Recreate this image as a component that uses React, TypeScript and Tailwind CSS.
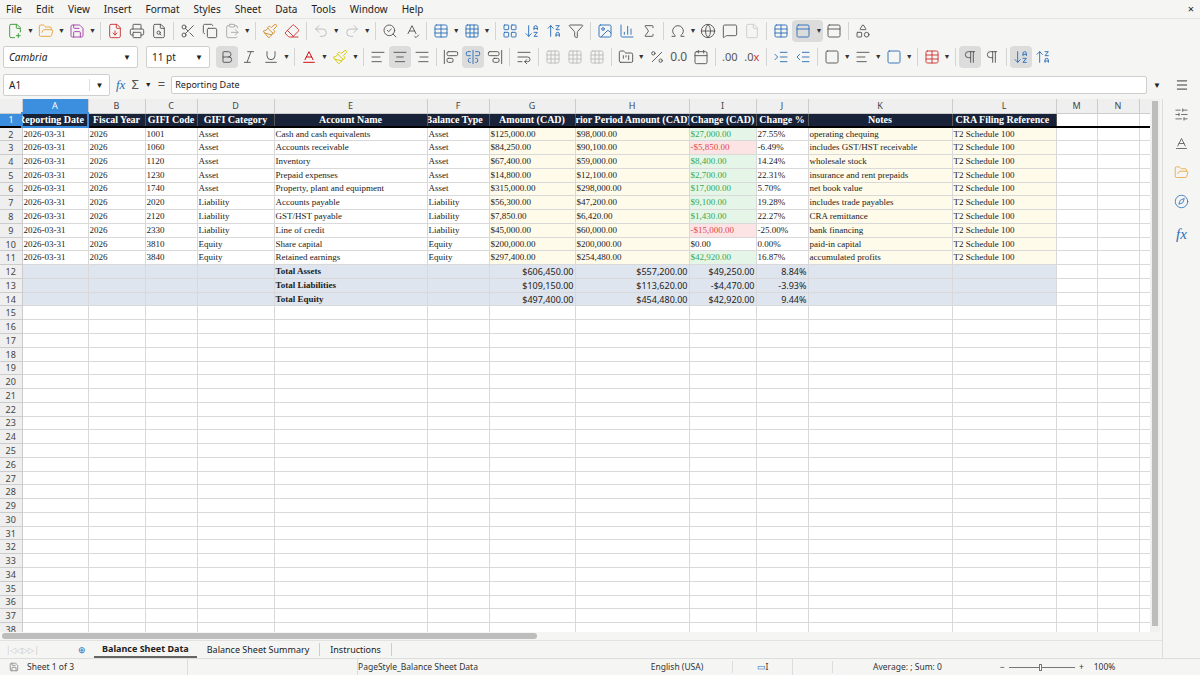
import React from "react";
import {
  FilePlus2, FolderOpen, Save, FileDown, Printer, FileSearch, Scissors, Copy, ClipboardPaste, Paintbrush, Eraser,
  Undo2, Redo2, SearchCheck, SpellCheck, Table, Grid3x3, ArrowDownAZ, ArrowUpZA, Filter, Image, BarChart3, Sigma,
  Omega, Globe, MessageSquare, File, LayoutGrid, PanelTop, Shapes, Bold, Italic, Underline, AlignLeft, AlignCenter,
  AlignRight, AlignStartVertical, AlignCenterVertical, AlignEndVertical, WrapText, Percent, Calendar, IndentIncrease,
  IndentDecrease, Square, Menu, SlidersHorizontal, Baseline, FolderKanban, Compass, Pilcrow
} from "lucide-react";

const cols: [string, number][] = [
  ["A", 66], ["B", 57], ["C", 52], ["D", 77], ["E", 153], ["F", 62], ["G", 86], ["H", 114],
  ["I", 67], ["J", 52], ["K", 144], ["L", 104], ["M", 41], ["N", 42], ["", 11],
];

type Row = string[];
const data: Row[] = [
  ["1001", "Asset", "Cash and cash equivalents", "Asset", "$125,000.00", "$98,000.00", "$27,000.00", "27.55%", "operating chequing"],
  ["1060", "Asset", "Accounts receivable", "Asset", "$84,250.00", "$90,100.00", "-$5,850.00", "-6.49%", "includes GST/HST receivable"],
  ["1120", "Asset", "Inventory", "Asset", "$67,400.00", "$59,000.00", "$8,400.00", "14.24%", "wholesale stock"],
  ["1230", "Asset", "Prepaid expenses", "Asset", "$14,800.00", "$12,100.00", "$2,700.00", "22.31%", "insurance and rent prepaids"],
  ["1740", "Asset", "Property, plant and equipment", "Asset", "$315,000.00", "$298,000.00", "$17,000.00", "5.70%", "net book value"],
  ["2020", "Liability", "Accounts payable", "Liability", "$56,300.00", "$47,200.00", "$9,100.00", "19.28%", "includes trade payables"],
  ["2120", "Liability", "GST/HST payable", "Liability", "$7,850.00", "$6,420.00", "$1,430.00", "22.27%", "CRA remittance"],
  ["2330", "Liability", "Line of credit", "Liability", "$45,000.00", "$60,000.00", "-$15,000.00", "-25.00%", "bank financing"],
  ["3810", "Equity", "Share capital", "Equity", "$200,000.00", "$200,000.00", "$0.00", "0.00%", "paid-in capital"],
  ["3840", "Equity", "Retained earnings", "Equity", "$297,400.00", "$254,480.00", "$42,920.00", "16.87%", "accumulated profits"],
];
const totals = [
  ["Total Assets", "$606,450.00", "$557,200.00", "$49,250.00", "8.84%"],
  ["Total Liabilities", "$109,150.00", "$113,620.00", "-$4,470.00", "-3.93%"],
  ["Total Equity", "$497,400.00", "$454,480.00", "$42,920.00", "9.44%"],
];
const headers = ["Reporting Date", "Fiscal Year", "GIFI Code", "GIFI Category", "Account Name", "Balance Type", "Amount (CAD)", "Prior Period Amount (CAD)", "Change (CAD)", "Change %", "Notes", "CRA Filing Reference"];

const serif = { fontFamily: '"Liberation Serif", "DejaVu Serif", serif' };
const ui = { fontFamily: '"Noto Sans", "Open Sans", sans-serif' };

const I = ({ c: C, cls = "text-[#555]" }: { c: any; cls?: string }) => (
  <div className="flex items-center justify-center w-[22px] h-[22px]"><C size={16} strokeWidth={1.4} className={cls} /></div>
);
const Dd = () => <span className="text-[7px] text-[#333] mx-[1px]">▼</span>;
const Sep = () => <div className="w-px h-[18px] bg-[#d4d4d4] mx-[3px]" />;

export default function App() {
  const cell = "h-[13.77px] p-0 px-[1px] border-r border-b border-[#d9d9d9] overflow-hidden whitespace-nowrap leading-[11px]";
  const rh = "h-[13.77px] p-0 bg-[#efefef] text-center text-[#444] border-r border-b border-[#ccc] leading-[11px]";
  return (
    <div className="w-[1200px] h-[675px] bg-[#f5f5f4] flex flex-col overflow-hidden text-[#222]" style={ui}>
      <div className="h-[18px] flex items-center gap-[14px] px-[6px] text-[10px]">
        {["File", "Edit", "View", "Insert", "Format", "Styles", "Sheet", "Data", "Tools", "Window", "Help"].map(m => <span key={m}>{m}</span>)}
        <span className="ml-auto text-[11px]">×</span>
      </div>
      <div className="h-[25px] flex items-center px-[4px] border-t border-[#e4e4e4]">
        <I c={FilePlus2} cls="text-[#3a9a3a]" /><Dd /><I c={FolderOpen} cls="text-[#e8a33a]" /><Dd /><I c={Save} cls="text-[#a33ea8]" /><Dd /><Sep />
        <I c={FileDown} cls="text-[#c33]" /><I c={Printer} /><I c={FileSearch} /><Sep />
        <I c={Scissors} /><I c={Copy} /><I c={ClipboardPaste} cls="text-[#aaa]" /><Dd /><Sep />
        <I c={Paintbrush} cls="text-[#d08a2a]" /><I c={Eraser} cls="text-[#c33]" /><Sep />
        <I c={Undo2} cls="text-[#bbb]" /><Dd /><I c={Redo2} cls="text-[#bbb]" /><Dd /><Sep />
        <I c={SearchCheck} /><I c={SpellCheck} /><Sep />
        <I c={Table} cls="text-[#2c6fb8]" /><Dd /><I c={Grid3x3} cls="text-[#2c6fb8]" /><Dd /><Sep />
        <I c={LayoutGrid} cls="text-[#2c6fb8]" /><I c={ArrowDownAZ} cls="text-[#2c6fb8]" /><I c={ArrowUpZA} cls="text-[#2c6fb8]" /><I c={Filter} /><Sep />
        <I c={Image} cls="text-[#2c6fb8]" /><I c={BarChart3} cls="text-[#2c6fb8]" /><I c={Sigma} /><Sep />
        <I c={Omega} /><Dd /><I c={Globe} /><I c={MessageSquare} /><I c={File} cls="text-[#ccc]" /><Sep />
        <I c={Table} cls="text-[#2c6fb8]" /><div className="bg-[#dcdcdc] rounded flex items-center"><I c={PanelTop} cls="text-[#2c6fb8]" /><Dd /></div><I c={PanelTop} /><Sep /><I c={Shapes} />
      </div>
      <div className="h-[28px] flex items-center px-[3px]">
        <div className="w-[135px] h-[22px] bg-white border border-[#cfcfcf] rounded-[2px] flex items-center text-[10px] italic pl-[5px]">
          <span className="flex-1">Cambria</span><span className="text-[8px] not-italic w-[20px] text-center">▼</span>
        </div>
        <div className="w-[64px] h-[22px] ml-[8px] bg-white border border-[#cfcfcf] rounded-[2px] flex items-center text-[10px] pl-[5px]">
          <span className="flex-1">11 pt</span><span className="text-[8px] w-[20px] text-center">▼</span>
        </div>
        <div className="bg-[#dcdcdc] rounded ml-[6px]"><I c={Bold} /></div><I c={Italic} /><I c={Underline} /><Dd /><Sep />
        <I c={Baseline} cls="text-[#c00]" /><Dd /><I c={Paintbrush} cls="text-[#d4c800]" /><Dd /><Sep />
        <I c={AlignLeft} /><div className="bg-[#dcdcdc] rounded"><I c={AlignCenter} /></div><I c={AlignRight} /><Sep />
        <I c={AlignStartVertical} /><div className="bg-[#dcdcdc] rounded"><I c={AlignCenterVertical} cls="text-[#2c6fb8]" /></div><I c={AlignEndVertical} /><Sep />
        <I c={WrapText} /><Sep /><I c={Grid3x3} cls="text-[#bbb]" /><I c={Grid3x3} cls="text-[#bbb]" /><I c={Grid3x3} cls="text-[#bbb]" /><Sep />
        <I c={FolderKanban} /><Dd /><I c={Percent} /><span className="text-[12px] text-[#555] w-[22px] text-center">0.0</span><I c={Calendar} /><Sep />
        <span className="text-[11px] text-[#555] w-[22px] text-center">.00</span><span className="text-[11px] text-[#555] w-[22px] text-center">.0<span className="text-[#c33]">x</span></span><Sep />
        <I c={IndentIncrease} cls="text-[#2c6fb8]" /><I c={IndentDecrease} cls="text-[#2c6fb8]" /><Sep />
        <I c={Square} /><Dd /><I c={AlignLeft} /><Dd /><I c={Square} cls="text-[#2c6fb8]" /><Dd /><Sep />
        <I c={Table} cls="text-[#c33]" /><Dd /><Sep />
        <div className="bg-[#dcdcdc] rounded"><I c={Pilcrow} /></div><I c={Pilcrow} /><Sep />
        <div className="bg-[#dcdcdc] rounded"><I c={ArrowDownAZ} cls="text-[#2c6fb8]" /></div><I c={ArrowUpZA} cls="text-[#2c6fb8]" />
      </div>
      <div className="h-[28px] flex items-center px-[3px] gap-[6px]">
        <div className="w-[107px] h-[22px] bg-white border border-[#cfcfcf] rounded-[2px] flex items-center text-[10px] pl-[5px]">
          <span className="flex-1">A1</span><span className="text-[8px] w-[20px] text-center border-l border-[#ddd]">▼</span>
        </div>
        <span className="italic text-[#2c6fb8] text-[13px]" style={serif}>fx</span>
        <span className="text-[13px] text-[#555]">Σ</span><span className="text-[7px]">▼</span>
        <span className="text-[13px] text-[#555]">=</span>
        <div className="flex-1 h-[18px] bg-white border border-[#cfcfcf] rounded-[2px] text-[9px] flex items-center pl-[3px]">Reporting Date</div>
        <span className="text-[8px]">▼</span>
        <div className="w-[30px] flex justify-center"><Menu size={14} strokeWidth={1.5} /></div>
      </div>
      <div className="flex-1 flex min-h-0">
        <div className="flex-1 flex flex-col min-w-0">
          <div className="flex-1 flex min-h-0">
            <div className="w-[1150px] overflow-hidden bg-white">
              <table className="table-fixed border-collapse text-[9px]" style={{ ...serif, width: 1150 }}>
                <colgroup>
                  <col style={{ width: 22 }} />
                  {cols.map(([, w], i) => <col key={i} style={{ width: w }} />)}
                </colgroup>
                <tbody>
                  <tr>
                    <td className="h-[14px] p-0 bg-[#efefef] border-r border-b border-[#ccc]"></td>
                    {cols.map(([n], i) => (
                      <td key={i} className={`h-[14px] p-0 leading-[11px] text-center border-r border-b border-[#ccc] text-[9px] ${n === "A" ? "bg-[#3c8fde] text-white" : "bg-[#efefef] text-[#444]"}`} style={ui}>{n}</td>
                    ))}
                  </tr>
                  <tr>
                    <td className="h-[14px] p-0 leading-[11px] bg-[#3c8fde] text-white text-center text-[9px] border-b-2 border-b-black" style={ui}>1</td>
                    {headers.map((h, i) => (
                      <td key={i} className={`h-[14px] p-0 bg-[#18233a] text-white font-bold text-[10px] whitespace-nowrap overflow-hidden border-r border-[#555] border-b-2 border-b-black leading-[11px] ${[0, 5, 7].includes(i) ? "" : "text-center"} ${i === 0 ? "outline outline-2 outline-[#3c8fde] -outline-offset-1" : ""} ${i === 11 ? "text-left pl-[3px]" : ""}`}>
                        {i === 0 ? <span className="relative -left-[4px]">Reporting Date</span> : i === 7 ? <span className="relative -left-[6px]">Prior Period Amount (CAD)</span> : i === 5 ? <span className="relative -left-[2px]">Balance Type</span> : h}
                      </td>
                    ))}
                    <td className="p-0 border-b-2 border-b-black border-r border-[#d9d9d9]"></td><td className="p-0 border-b-2 border-b-black border-r border-[#d9d9d9]"></td><td className="p-0 border-b-2 border-b-black"></td>
                  </tr>
                  {data.map((r, i) => {
                    const neg = r[6].startsWith("-");
                    const zero = r[6] === "$0.00";
                    return (
                      <tr key={i}>
                        <td className={rh} style={ui}>{i + 2}</td>
                        <td className={cell}>2026-03-31</td>
                        <td className={cell}>2026</td>
                        <td className={cell}>{r[0]}</td>
                        <td className={cell}>{r[1]}</td>
                        <td className={cell}>{r[2]}</td>
                        <td className={cell}>{r[3]}</td>
                        <td className={`${cell} bg-[#fffbea]`}>{r[4]}</td>
                        <td className={`${cell} bg-[#fffbea]`}>{r[5]}</td>
                        <td className={`${cell} ${zero ? "bg-white" : neg ? "bg-[#fde4e4] text-[#e04848]" : "bg-[#e5f6e8] text-[#33a852]"}`}>{r[6]}</td>
                        <td className={cell}>{r[7]}</td>
                        <td className={`${cell} bg-[#fffbea]`}>{r[8]}</td>
                        <td className={`${cell} bg-[#fffbea]`}>T2 Schedule 100</td>
                        <td className={cell}></td><td className={cell}></td><td className={cell}></td>
                      </tr>
                    );
                  })}
                  {totals.map((t, i) => (
                    <tr key={i}>
                      <td className={rh} style={ui}>{i + 12}</td>
                      {[0, 1, 2, 3].map(k => <td key={k} className={`${cell} bg-[#dfe5ee]`}></td>)}
                      <td className={`${cell} bg-[#dfe5ee] font-bold`}>{t[0]}</td>
                      <td className={`${cell} bg-[#dfe5ee]`}></td>
                      {[1, 2, 3, 4].map(k => <td key={k} className={`${cell} bg-[#dfe5ee] text-right text-[9px]`} style={ui}>{t[k]}</td>)}
                      <td className={`${cell} bg-[#dfe5ee]`}></td><td className={`${cell} bg-[#dfe5ee]`}></td>
                      <td className={cell}></td><td className={cell}></td><td className={cell}></td>
                    </tr>
                  ))}
                  {Array.from({ length: 25 }, (_, i) => (
                    <tr key={i}>
                      <td className={rh} style={ui}>{i + 15}</td>
                      {cols.map((_, k) => <td key={k} className={cell}></td>)}
                    </tr>
                  ))}
                </tbody>
              </table>
            </div>
            <div className="w-[10px] bg-[#f0f0f0] flex justify-center pt-[2px]">
              <div className="w-[6px] h-[525px] bg-[#bdbdbd]" />
            </div>
          </div>
          <div className="h-[8px] flex items-center bg-[#f5f5f4]">
            <div className="w-[535px] h-[6px] bg-[#bdbdbd] ml-[2px] rounded-sm" />
          </div>
          <div className="h-[18px] flex items-center text-[9px] border-t border-[#e2e2e2]">
            <span className="text-[#ccc] text-[8px] w-[62px] pl-[6px] overflow-hidden whitespace-nowrap">|◁◁▷▷|</span>
            <span className="text-[#2c6fb8] ml-[16px] mr-[8px]">⊕</span>
            <span className="font-bold px-[8px] border-b-2 border-[#666] h-full flex items-center">Balance Sheet Data</span>
            <span className="px-[10px] border-r border-[#ccc]">Balance Sheet Summary</span>
            <span className="px-[10px] border-r border-[#ccc]">Instructions</span>
          </div>
        </div>
        <div className="w-[38px] border-l border-[#ddd] flex flex-col items-center gap-[14px] pt-[8px]">
          <SlidersHorizontal size={15} strokeWidth={1.3} className="text-[#555]" />
          <Baseline size={15} strokeWidth={1.3} className="text-[#555]" />
          <FolderOpen size={15} strokeWidth={1.3} className="text-[#e8a33a]" />
          <Compass size={15} strokeWidth={1.3} className="text-[#2c6fb8]" />
          <span className="italic text-[#2c6fb8] text-[15px]" style={serif}>fx</span>
        </div>
      </div>
      <div className="h-[17px] flex items-center text-[8.5px] text-[#333] border-t border-[#ddd]">
        <span className="w-[27px] flex justify-center"><Save size={10} className="text-[#888]" /></span>
        <span className="w-[160px]">Sheet 1 of 3</span>
        <span className="w-[170px] border-l border-[#ddd] h-full"></span>
        <span className="w-[265px] border-l border-[#ddd] h-full flex items-center">PageStyle_Balance Sheet Data</span>
        <span className="w-[110px] text-center">English (USA)</span>
        <span className="w-[60px] text-center border-l border-[#ddd] text-[#2c6fb8]">▭<span className="text-[#333]">I</span></span>
        <span className="w-[40px] border-l border-[#ddd] h-full"></span>
        <span className="w-[150px] text-center border-l border-[#ddd]">Average: ; Sum: 0</span>
        <span className="flex items-center gap-[4px] ml-[18px]">
          <span>−</span><span className="w-[66px] h-px bg-[#777] relative"><span className="absolute left-[30px] -top-[3px] w-[3px] h-[7px] border border-[#777] bg-white" /></span><span>+</span>
        </span>
        <span className="ml-[10px]">100%</span>
      </div>
    </div>
  );
}
